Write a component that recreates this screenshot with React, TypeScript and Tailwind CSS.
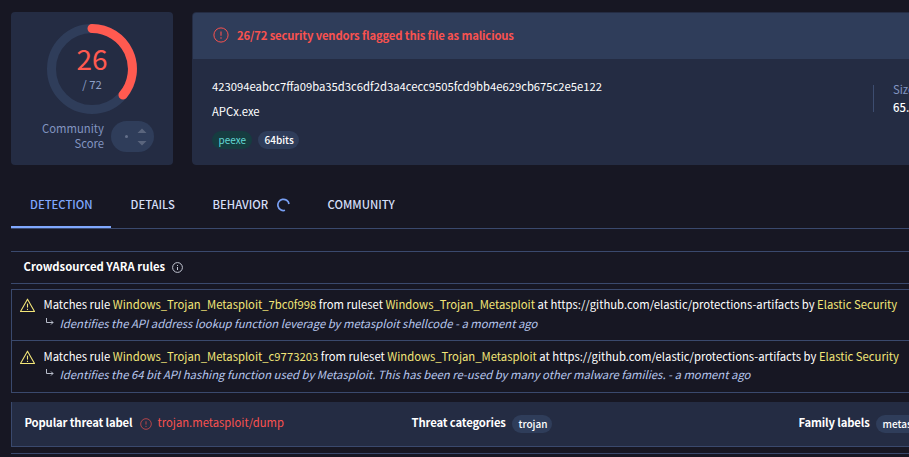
import type { ReactNode } from "react";

function AlertCircle({ size, className = "" }: { size: number; className?: string }) {
  return (
    <svg width={size} height={size} viewBox="0 0 16 16" fill="none" className={`shrink-0 ${className}`}>
      <circle cx="8" cy="8" r="7.1" stroke="currentColor" strokeWidth="1" />
      <path d="M8 4.4v4.4" stroke="currentColor" strokeWidth="1.1" />
      <circle cx="8" cy="11" r="0.75" fill="currentColor" />
    </svg>
  );
}

function Warning() {
  return (
    <svg width="16" height="15" viewBox="0 0 16 15" fill="none" className="shrink-0 text-[#f3e678]">
      <path d="M7.500 1.2 14.500 13.500H.5Z" stroke="currentColor" strokeWidth="1.1" strokeLinejoin="round" />
      <path d="M7.500 5.600v4" stroke="currentColor" strokeWidth="1.1" />
      <path d="M7.500 10.800v1.200" stroke="currentColor" strokeWidth="1.1" />
    </svg>
  );
}

function Chip({ children, className }: { children: ReactNode; className: string }) {
  return <span className={`flex h-[18px] shrink-0 items-center rounded-full pb-px pl-[6.500px] text-[10px] ${className}`}>{children}</span>;
}

function ScoreCard() {
  return (
    <section className="flex h-[153px] w-[162px] shrink-0 flex-col items-center rounded bg-[#242c43] pt-3">
      <div className="grid size-[90px] place-items-center">
        <svg width="90" height="90" viewBox="0 0 90 90" fill="none" className="col-start-1 row-start-1">
          <circle cx="45" cy="45" r="40.5" stroke="#2f3d5a" strokeWidth="9" />
          <path d="M45 4.5A40.5 40.5 0 0 1 76 71" stroke="#ff5a50" strokeWidth="9" strokeLinecap="round" />
        </svg>
        <div className="col-start-1 row-start-1 flex flex-col items-center">
          <span className="text-[28px] leading-[31px] text-[#ff5a50]">26</span>
          <span className="text-[11.3px] leading-[21px] text-[#8fa0c8]">/ 72</span>
        </div>
      </div>
      <div className="mt-[7px] flex w-full items-start pl-[31px]">
        <p className="w-[62px] shrink-0 whitespace-normal text-right text-[11.3px] leading-[15px] text-[#8294c0]">Community Score</p>
        <div className="ml-[7px] flex h-[31px] w-[43px] items-center rounded-full bg-[#2f3d5a] pl-[14px] text-[#5a657d]">
          <span className="size-[3px] rounded-full bg-[#64708a]" />
          <svg width="10" height="18" viewBox="0 0 10 18" fill="currentColor" className="ml-[9px]">
            <path d="M0.5 5 5 0.5 9.500 5ZM0.500 13h9L5 17.500Z" />
          </svg>
        </div>
      </div>
    </section>
  );
}

function FileCard() {
  return (
    <section className="h-[153px] w-[900px] shrink-0 rounded border border-[#242c43] bg-[#242c43]">
      <header className="flex h-[46px] items-center rounded-t-[3px] bg-[#2f3d5a] pb-[2px] pl-[20px] text-[#f9524f]">
        <AlertCircle size={16} />
        <span className="ml-[8px] text-[11.3px] font-bold leading-4 tracking-[-0.16px]">26/72 security vendors flagged this file as malicious</span>
      </header>
      <div className="flex">
        <div className="flex w-[680px] flex-col pl-[19px] pt-[17px] text-[11.3px] leading-5 text-white">
          <span className="text-[11.28px]">423094eabcc7ffa09ba35d3c6df2d3a4cecc9505fcd9bb4e629cb675c2e5e122</span>
          <span className="mt-[5px]">APCx.exe</span>
          <div className="mt-[10px] flex gap-[6px]">
            <Chip className="w-[40px] bg-[#163c40] text-[#62d8d4]">peexe</Chip>
            <Chip className="w-[41px] bg-[#2f3d5a] font-medium text-white">64bits</Chip>
          </div>
        </div>
        <div className="mt-[26px] flex h-[27px] flex-col justify-center border-l border-[#3d4d70] pl-[19px] text-[11.3px] leading-[19px]">
          <span className="-mt-px text-[#8294c0]">Size</span>
          <span className="-mt-px font-medium text-white">65.00 KB</span>
        </div>
      </div>
    </section>
  );
}

function Tab({ children, className }: { children: ReactNode; className: string }) {
  return <div className={`flex items-center text-[11.3px] font-medium ${className}`}>{children}</div>;
}

function Rule({ rule, description, className, sub }: { rule: string; description: string; className: string; sub: string }) {
  return (
    <div className={`flex pl-2 ${className}`}>
      <div className="pt-[4px]"><Warning /></div>
      <div className="ml-[7.500px] whitespace-nowrap text-[11.29px] leading-[20px]">
        <p className="text-white">
          Matches rule <span className="text-[#f3e678]">{rule}</span> from ruleset{" "}
          <span className="text-[#f3e678]">Windows_Trojan_Metasploit</span> at https://github.com/elastic/protections-artifacts by{" "}
          <span className="text-[#f3e678]">Elastic Security</span>
        </p>
        <p className={`flex text-[#b7c7ee] ${sub}`}>
          <svg width="8" height="8" viewBox="0 0 8 8" fill="none" className="mt-[5px] ml-[2px] mr-[6px]">
            <path d="M.5 0v4.500H7M5 2.500l2 2-2 2" stroke="#b8bdca" />
          </svg>
          <em>{description}</em>
        </p>
      </div>
    </div>
  );
}

export default function App() {
  return (
    <main className="h-[457px] w-[909px] overflow-hidden whitespace-nowrap bg-[#171723] pl-[11px] pt-3 font-['Noto_Sans_CJK_SC',sans-serif]">
      <div className="flex gap-[19px]">
        <ScoreCard />
        <FileCard />
      </div>
      <nav className="mt-[15px] flex h-[49px] border-b border-[#3a496d]">
        <Tab className="w-[100px] border-b-2 border-[#80a8ff] pl-[19px] pt-[2px] text-[#80a8ff]">DETECTION</Tab>
        <Tab className="w-[82px] pl-[19.500px] text-[#d5dff8]">DETAILS</Tab>
        <Tab className="w-[116px] pl-[19.500px] text-[#d5dff8]">
          <span className="w-[64.500px]">BEHAVIOR</span>
          <svg width="13" height="14" viewBox="0 0 13 14" fill="none" className="mt-px">
            <path d="M12 6A5.600 5.600 0 1 0 8 12.300" stroke="#789ff3" strokeWidth="1.7" />
          </svg>
        </Tab>
        <Tab className="pl-[18.500px] text-[#d5dff8]">COMMUNITY</Tab>
      </nav>
      <h2 className="mt-[22px] flex h-[33px] items-center border-y border-[#3a496d] pl-[12.500px] text-[11.3px] font-bold text-white">
        <span className="w-[148.500px] pb-[2px]">Crowdsourced YARA rules</span>
        <svg width="11" height="11" viewBox="0 0 11 11" fill="none" stroke="#c2c6d2">
          <circle cx="5.500" cy="5.500" r="4.900" />
          <path d="M5.500 5v3M5.500 3v1" />
        </svg>
      </h2>
      <div className="mt-[5px] h-[104px] border border-r-0 border-[#3a496d]">
        <Rule rule="Windows_Trojan_Metasploit_7bc0f998" description="Identifies the API address lookup function leverage by metasploit shellcode - a moment ago" className="h-[51px] border-b border-[#3a496d] pt-[4px]" sub="-mt-px" />
        <Rule rule="Windows_Trojan_Metasploit_c9773203" description="Identifies the 64 bit API hashing function used by Metasploit. This has been re-used by many other malware families. - a moment ago" className="pt-[5px]" sub="-mt-[2px]" />
      </div>
      <div className="mt-[9px] flex h-[45px] items-center border-b border-l border-[#3a496d] bg-[#242c43] pb-px pl-[12.500px] text-[11.3px] text-white">
        <span className="w-[115.500px] shrink-0 pb-[2px] font-bold tracking-[-0.16px]">Popular threat label</span>
        <AlertCircle size={12} className="text-[#df4d4d]" />
        <span className="ml-[5.500px] w-[254px] shrink-0 pb-[2px] text-[11.25px] text-[#f9524f]">trojan.metasploit/dump</span>
        <span className="w-[100.500px] shrink-0 pb-[2px] font-bold tracking-[-0.14px]">Threat categories</span>
        <Chip className="w-[40px] bg-[#2f3d5a] font-medium">trojan</Chip>
        <span className="ml-[246.500px] w-[77.500px] shrink-0 pb-[2px] font-bold tracking-[-0.14px]">Family labels</span>
        <Chip className="w-[74px] bg-[#2f3d5a] font-medium">metasploit</Chip>
      </div>
      <div className="mt-[6px] h-px bg-[#3a496d]" />
    </main>
  );
}
